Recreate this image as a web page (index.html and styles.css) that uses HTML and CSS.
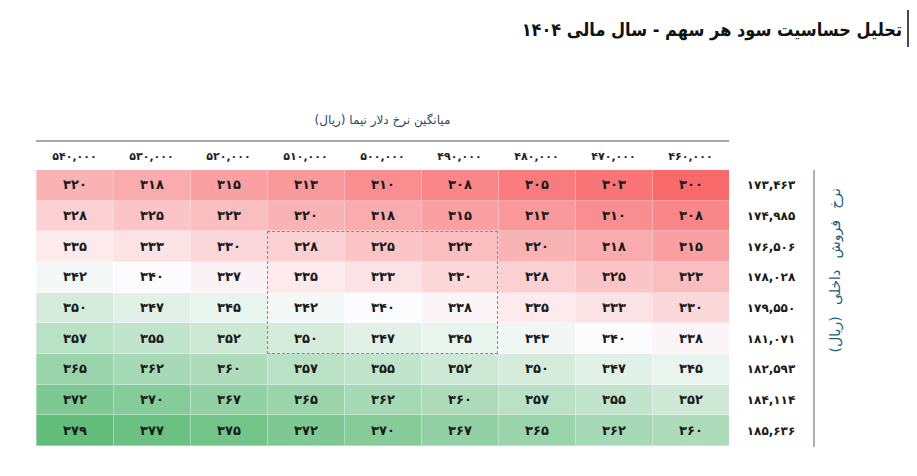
FILE: index.html
```html
<!DOCTYPE html>
<html lang="fa" dir="rtl">
<head>
<meta charset="utf-8">
<title>تحلیل حساسیت سود هر سهم</title>
<link rel="stylesheet" href="styles.css">
</head>
<body>
<header class="title-row">
  <h1 class="title">تحلیل حساسیت سود هر سهم - سال مالی ۱۴۰۴</h1>
</header>
<section class="chart">
  <div class="axis-y">
    <div class="axis-y-line"><span class="axis-y-label">نرخ فروش داخلی (ریال)</span></div>
  </div>
  <div class="table-area">
    <div class="axis-x">میانگین نرخ دلار نیما (ریال)</div>
    <div class="grid">
      <div class="corner"></div>
      <div class="hd">۴۶۰,۰۰۰</div><div class="hd">۴۷۰,۰۰۰</div><div class="hd">۴۸۰,۰۰۰</div><div class="hd">۴۹۰,۰۰۰</div><div class="hd">۵۰۰,۰۰۰</div><div class="hd">۵۱۰,۰۰۰</div><div class="hd">۵۲۰,۰۰۰</div><div class="hd">۵۳۰,۰۰۰</div><div class="hd">۵۴۰,۰۰۰</div>

      <div class="lbl">۱۷۳,۴۶۳</div>
      <div class="c">۳۰۰</div><div class="c">۳۰۳</div><div class="c">۳۰۵</div><div class="c">۳۰۸</div><div class="c">۳۱۰</div><div class="c">۳۱۳</div><div class="c">۳۱۵</div><div class="c">۳۱۸</div><div class="c">۳۲۰</div>

      <div class="lbl">۱۷۴,۹۸۵</div>
      <div class="c">۳۰۸</div><div class="c">۳۱۰</div><div class="c">۳۱۳</div><div class="c">۳۱۵</div><div class="c">۳۱۸</div><div class="c">۳۲۰</div><div class="c">۳۲۳</div><div class="c">۳۲۵</div><div class="c">۳۲۸</div>

      <div class="lbl">۱۷۶,۵۰۶</div>
      <div class="c">۳۱۵</div><div class="c">۳۱۸</div><div class="c">۳۲۰</div><div class="c">۳۲۳</div><div class="c">۳۲۵</div><div class="c">۳۲۸</div><div class="c">۳۳۰</div><div class="c">۳۳۳</div><div class="c">۳۳۵</div>

      <div class="lbl">۱۷۸,۰۲۸</div>
      <div class="c">۳۲۳</div><div class="c">۳۲۵</div><div class="c">۳۲۸</div><div class="c">۳۳۰</div><div class="c">۳۳۳</div><div class="c">۳۳۵</div><div class="c">۳۳۷</div><div class="c">۳۴۰</div><div class="c">۳۴۲</div>

      <div class="lbl">۱۷۹,۵۵۰</div>
      <div class="c">۳۳۰</div><div class="c">۳۳۳</div><div class="c">۳۳۵</div><div class="c">۳۳۸</div><div class="c">۳۴۰</div><div class="c">۳۴۲</div><div class="c">۳۴۵</div><div class="c">۳۴۷</div><div class="c">۳۵۰</div>

      <div class="lbl">۱۸۱,۰۷۱</div>
      <div class="c">۳۳۸</div><div class="c">۳۴۰</div><div class="c">۳۴۳</div><div class="c">۳۴۵</div><div class="c">۳۴۷</div><div class="c">۳۵۰</div><div class="c">۳۵۲</div><div class="c">۳۵۵</div><div class="c">۳۵۷</div>

      <div class="lbl">۱۸۲,۵۹۳</div>
      <div class="c">۳۴۵</div><div class="c">۳۴۷</div><div class="c">۳۵۰</div><div class="c">۳۵۲</div><div class="c">۳۵۵</div><div class="c">۳۵۷</div><div class="c">۳۶۰</div><div class="c">۳۶۲</div><div class="c">۳۶۵</div>

      <div class="lbl">۱۸۴,۱۱۴</div>
      <div class="c">۳۵۲</div><div class="c">۳۵۵</div><div class="c">۳۵۷</div><div class="c">۳۶۰</div><div class="c">۳۶۲</div><div class="c">۳۶۵</div><div class="c">۳۶۷</div><div class="c">۳۷۰</div><div class="c">۳۷۲</div>

      <div class="lbl">۱۸۵,۶۳۶</div>
      <div class="c">۳۶۰</div><div class="c">۳۶۲</div><div class="c">۳۶۵</div><div class="c">۳۶۷</div><div class="c">۳۷۰</div><div class="c">۳۷۲</div><div class="c">۳۷۵</div><div class="c">۳۷۷</div><div class="c">۳۷۹</div>

      <div class="focus"></div>
    </div>
  </div>
</section>
<script src="script.js"></script>
</body>
</html>
```

FILE: styles.css
```css
html, body {
  margin: 0;
  padding: 0;
  background: #ffffff;
}
body {
  font-family: "DejaVu Sans", sans-serif;
  direction: rtl;
  color: #1a1a1a;
}
.title-row {
  display: flex;
  justify-content: flex-start;
  padding: 10px 8px 0 0;
}
.title {
  margin: 0;
  font-family: "DejaVu Sans Condensed", "DejaVu Sans", sans-serif;
  font-size: 18px;
  font-weight: bold;
  color: #111;
  border-right: 2px solid #4a4a4a;
  padding-right: 5px;
  height: 37px;
  line-height: 40px;
}
.chart {
  display: flex;
  margin: 53px 0 0 36px;
}
.axis-y {
  width: 104px;
  padding-top: 70px;
}
.axis-y-line {
  height: 277px;
  border-left: 2px solid #aab0b8;
  display: flex;
  justify-content: flex-end;
  align-items: flex-start;
}
.axis-y-label {
  writing-mode: vertical-rl;
  transform: rotate(180deg);
  font-size: 14px;
  word-spacing: 7px;
  color: #1f5f7a;
  margin: 18px 0 0 12px;
}
.table-area {
  flex: 1;
  display: flex;
  flex-direction: column;
}
.axis-x {
  height: 40px;
  line-height: 40px;
  margin-right: 84px;
  text-align: center;
  font-size: 12px;
  color: #2e4a5c;
}
.grid {
  position: relative;
  display: grid;
  grid-template-columns: 84px repeat(9, 1fr);
  grid-template-rows: 30px;
  grid-auto-rows: 30.67px;
}
.hd {
  border-top: 2px solid #a6a8aa;
  display: flex;
  align-items: center;
  justify-content: center;
  font-size: 11px;
  font-weight: bold;
  color: #222;
}
.lbl {
  display: flex;
  align-items: center;
  justify-content: center;
  font-size: 12px;
  font-weight: bold;
  color: #1a1a1a;
}
.c {
  display: flex;
  align-items: center;
  justify-content: center;
  font-size: 13px;
  font-weight: bold;
  color: #1a1a1a;
  border-left: 1px solid rgba(255, 255, 255, 0.35);
  border-bottom: 1px solid rgba(255, 255, 255, 0.35);
}
.focus {
  position: absolute;
  grid-row: 4 / span 4;
  grid-column: 5 / span 3;
  inset: 0;
  border: 1px dashed #8a8a8a;
  pointer-events: none;
}
```

FILE: script.js
```js
(function () {
  var digits = '۰۱۲۳۴۵۶۷۸۹';
  var min = 300, mid = 340, max = 379;
  var red = [248, 105, 107], white = [252, 252, 255], green = [99, 190, 123];
  function mix(a, b, t) {
    return 'rgb(' + a.map(function (v, i) { return Math.round(v + (b[i] - v) * t); }).join(',') + ')';
  }
  document.querySelectorAll('.c').forEach(function (el) {
    var v = parseInt(el.textContent.replace(/[۰-۹]/g, function (d) { return digits.indexOf(d); }), 10);
    var col = v <= mid ? mix(red, white, (v - min) / (mid - min)) : mix(white, green, (v - mid) / (max - mid));
    el.style.backgroundColor = col;
  });
})();
```
